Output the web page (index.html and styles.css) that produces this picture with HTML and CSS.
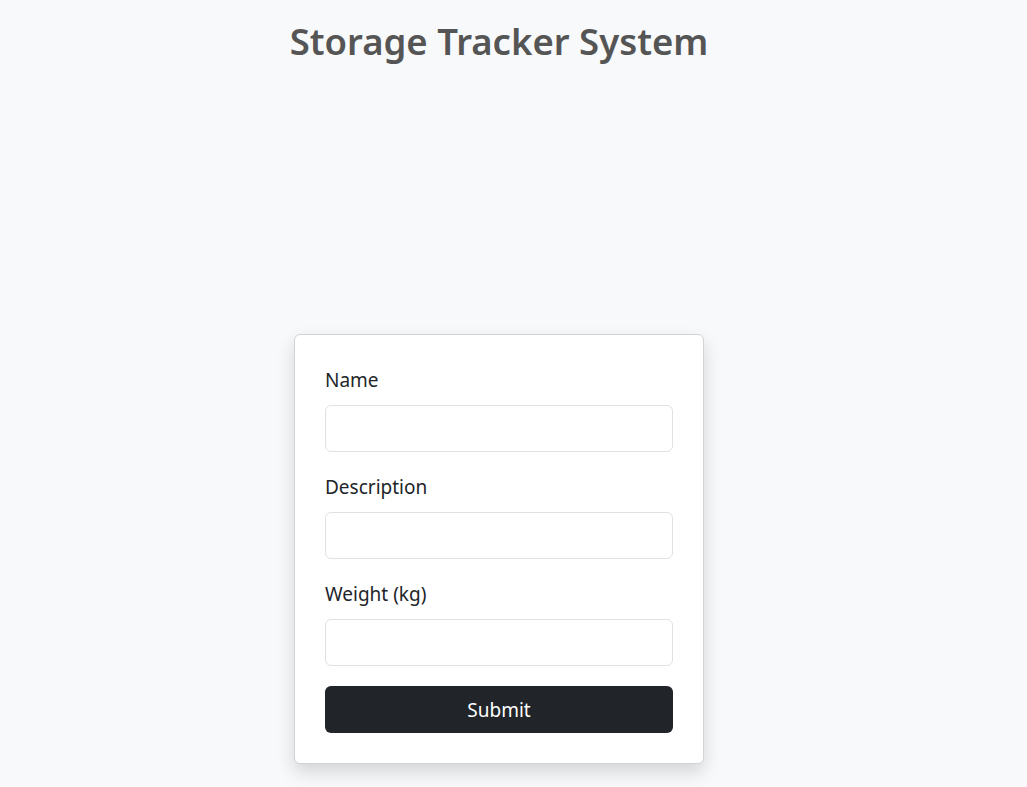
FILE: index.html
```html
<!DOCTYPE html>
<html lang="en">
<head>
<meta charset="utf-8">
<title>Storage Tracker System</title>
<link rel="stylesheet" href="styles.css">
</head>
<body>
<main class="page">
  <h1 class="title">Storage Tracker System</h1>
  <form class="card">
    <div class="field">
      <label class="label" for="name">Name</label>
      <input class="input" id="name" type="text">
    </div>
    <div class="field">
      <label class="label" for="desc">Description</label>
      <input class="input" id="desc" type="text">
    </div>
    <div class="field">
      <label class="label" for="weight">Weight (kg)</label>
      <input class="input" id="weight" type="number">
    </div>
    <button class="submit" type="submit">Submit</button>
  </form>
</main>
</body>
</html>
```
FILE: styles.css
```css
html, body {
  margin: 0;
  padding: 0;
  background: #f8f9fa;
  font-family: "Noto Sans", "Open Sans", sans-serif;
  color: #212529;
}
.page {
  width: 998px;
  display: flex;
  flex-direction: column;
  align-items: center;
  padding-bottom: 24px;
}
.title {
  margin: 18px 0 0;
  font-size: 36.5px;
  line-height: 46px;
  font-weight: 600;
  color: #555555;
}
.card {
  margin-top: 270px;
  width: 348px;
  padding: 30px 30px 30px;
  background: #fff;
  border: 1px solid #d3d3d3;
  border-radius: 6px;
  box-shadow: 0 8px 18px rgba(0, 0, 0, 0.15);
  display: flex;
  flex-direction: column;
}
.field {
  display: flex;
  flex-direction: column;
  margin-bottom: 20px;
}
.label {
  font-size: 19px;
  line-height: 30px;
  margin-bottom: 10px;
}
.input {
  box-sizing: border-box;
  height: 47px;
  width: 100%;
  border: 1px solid #dee2e6;
  border-radius: 6px;
  background: #fff;
  font: inherit;
  padding: 6px 12px;
}
.submit {
  height: 47px;
  width: 100%;
  border: none;
  border-radius: 6px;
  background: #212529;
  color: #fff;
  font-family: inherit;
  font-size: 19px;
  cursor: pointer;
}
```
